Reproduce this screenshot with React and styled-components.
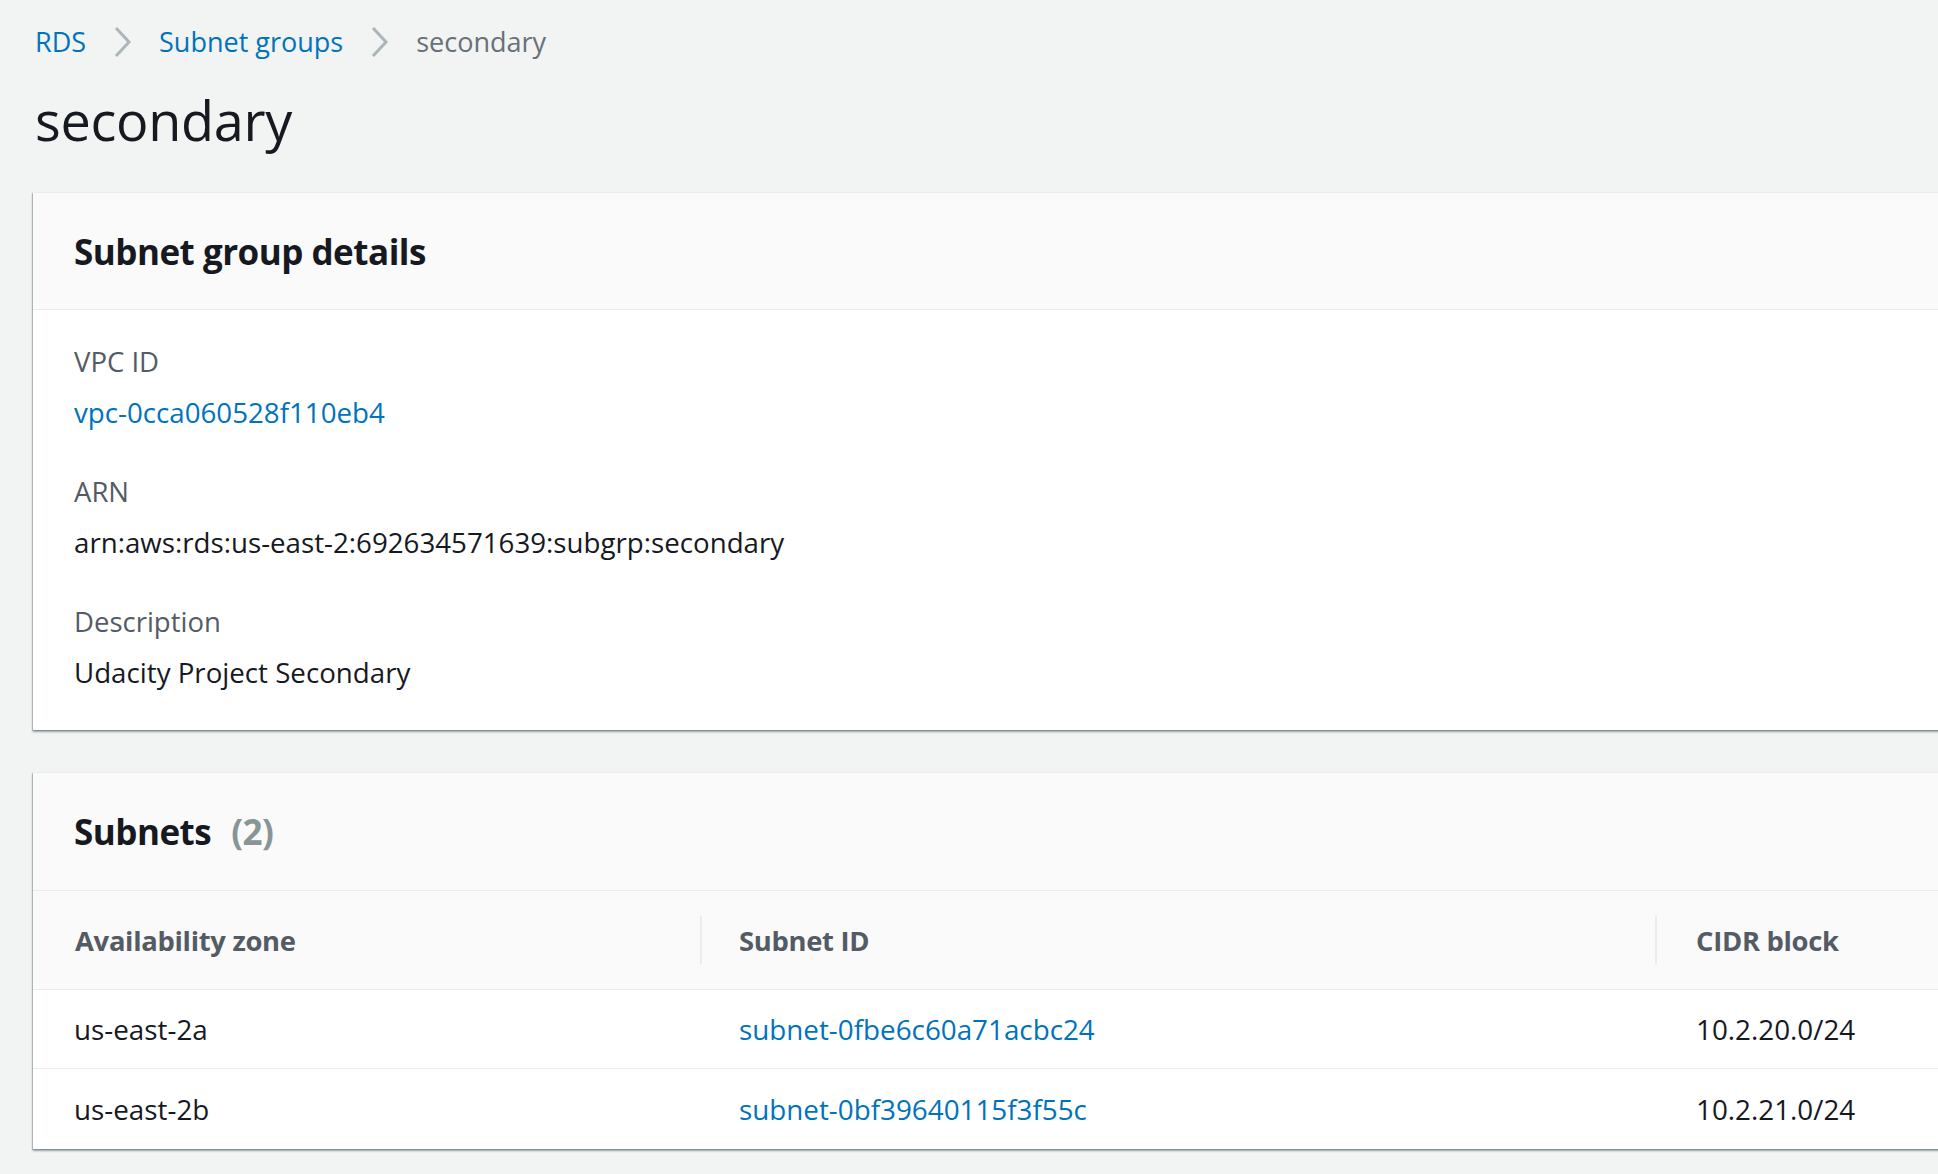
import React from "react";
import styled, { createGlobalStyle } from "styled-components";

const GlobalStyle = createGlobalStyle`
  html, body {
    margin: 0;
    padding: 0;
    background: #f2f3f3;
    overflow: hidden;
  }
  body {
    font-family: "Open Sans", "Noto Sans", sans-serif;
    color: #16191f;
  }
  * { box-sizing: border-box; }
`;

const Page = styled.div`
  width: 1938px;
  min-height: 1174px;
  padding: 22px 0 0 33px;
  overflow: hidden;
`;

const Breadcrumbs = styled.nav`
  display: flex;
  align-items: center;
  height: 40px;
  padding-left: 2px;
  font-size: 27px;
  line-height: 40px;
`;

const Crumb = styled.a`
  color: ${(p) => (p.$current ? "#687078" : "#0073bb")};
  text-decoration: none;
`;

const Chevron = styled.svg`
  width: 18px;
  height: 32px;
  margin: 0 27px 0 28px;
  flex: none;
`;

const Title = styled.h1`
  margin: 24px 0 0 2px;
  font-size: 54px;
  line-height: 68px;
  font-weight: 400;
  color: #16191f;
  letter-spacing: -0.3px;
`;

const Card = styled.section`
  margin: ${(p) => p.$top}px -80px 0 0;
  background: #ffffff;
  border-top: 1px solid #eaeded;
  box-shadow: 0 2px 2px 0 rgba(0, 28, 36, 0.35),
    -1px 1px 1px 0 rgba(0, 28, 36, 0.2);
`;

const CardHeader = styled.header`
  display: flex;
  align-items: center;
  height: ${(p) => p.$h}px;
  padding-left: 41px;
  background: #fafafa;
  border-bottom: 1px solid #eaeded;
`;

const CardTitle = styled.h2`
  margin: 0;
  font-size: 35px;
  font-weight: 700;
  color: #16191f;
  letter-spacing: -0.5px;
`;

const Counter = styled.span`
  margin-left: 20px;
  font-weight: 700;
  color: #879596;
`;

const CardBody = styled.div`
  padding: 19px 41px 33px;
`;

const Field = styled.div`
  display: flex;
  flex-direction: column;
  padding-top: 8px;
  & + & {
    margin-top: 22px;
  }
`;

const Label = styled.div`
  font-size: 27.5px;
  line-height: 50px;
  color: #545b64;
`;

const Value = styled.div`
  font-size: 27.7px;
  line-height: 50px;
  color: #16191f;
`;

const Link = styled.a`
  color: #0073bb;
  text-decoration: none;
`;

const Table = styled.div`
  display: grid;
  grid-template-columns: 667px 955px 1fr;
`;

const HeadCell = styled.div`
  position: relative;
  display: flex;
  align-items: center;
  height: 99px;
  padding-left: ${(p) => p.$pad}px;
  background: #fafafa;
  border-bottom: 1px solid #eaeded;
  font-size: 27.4px;
  font-weight: 700;
  color: #545b64;
  letter-spacing: -0.3px;

  ${(p) =>
    p.$divider &&
    `&::before {
      content: "";
      position: absolute;
      left: 0;
      top: 25px;
      width: 2px;
      height: 48px;
      background: #eaeded;
    }`}
`;

const Cell = styled.div`
  display: flex;
  align-items: center;
  height: ${(p) => (p.$last ? 80 : 79)}px;
  padding-left: ${(p) => p.$pad}px;
  border-bottom: ${(p) => (p.$last ? "none" : "1px solid #eaeded")};
  font-size: 27.8px;
  color: #16191f;
`;

const ChevronIcon = () => (
  <Chevron viewBox="0 0 18 32" aria-hidden="true">
    <polyline
      points="2,2 15,16 2,30"
      fill="none"
      stroke="#aab7b8"
      strokeWidth="3"
    />
  </Chevron>
);

const subnets = [
  { az: "us-east-2a", id: "subnet-0fbe6c60a71acbc24", cidr: "10.2.20.0/24" },
  { az: "us-east-2b", id: "subnet-0bf39640115f3f55c", cidr: "10.2.21.0/24" },
];

export default function App() {
  return (
    <>
      <GlobalStyle />
      <Page>
        <Breadcrumbs>
          <Crumb href="#">RDS</Crumb>
          <ChevronIcon />
          <Crumb href="#">Subnet groups</Crumb>
          <ChevronIcon />
          <Crumb $current>secondary</Crumb>
        </Breadcrumbs>
        <Title>secondary</Title>

        <Card $top={38}>
          <CardHeader $h={117}>
            <CardTitle>Subnet group details</CardTitle>
          </CardHeader>
          <CardBody>
            <Field>
              <Label>VPC ID</Label>
              <Value>
                <Link href="#">vpc-0cca060528f110eb4</Link>
              </Value>
            </Field>
            <Field>
              <Label>ARN</Label>
              <Value>arn:aws:rds:us-east-2:692634571639:subgrp:secondary</Value>
            </Field>
            <Field>
              <Label>Description</Label>
              <Value>Udacity Project Secondary</Value>
            </Field>
          </CardBody>
        </Card>

        <Card $top={42}>
          <CardHeader $h={118}>
            <CardTitle>
              Subnets<Counter>(2)</Counter>
            </CardTitle>
          </CardHeader>
          <Table>
            <HeadCell $pad={42}>Availability zone</HeadCell>
            <HeadCell $pad={39} $divider>
              Subnet ID
            </HeadCell>
            <HeadCell $pad={41} $divider>
              CIDR block
            </HeadCell>
            {subnets.map((s, i) => {
              const last = i === subnets.length - 1;
              return (
                <React.Fragment key={s.id}>
                  <Cell $pad={41} $last={last}>
                    {s.az}
                  </Cell>
                  <Cell $pad={39} $last={last}>
                    <Link href="#">{s.id}</Link>
                  </Cell>
                  <Cell $pad={41} $last={last}>
                    {s.cidr}
                  </Cell>
                </React.Fragment>
              );
            })}
          </Table>
        </Card>
      </Page>
    </>
  );
}
